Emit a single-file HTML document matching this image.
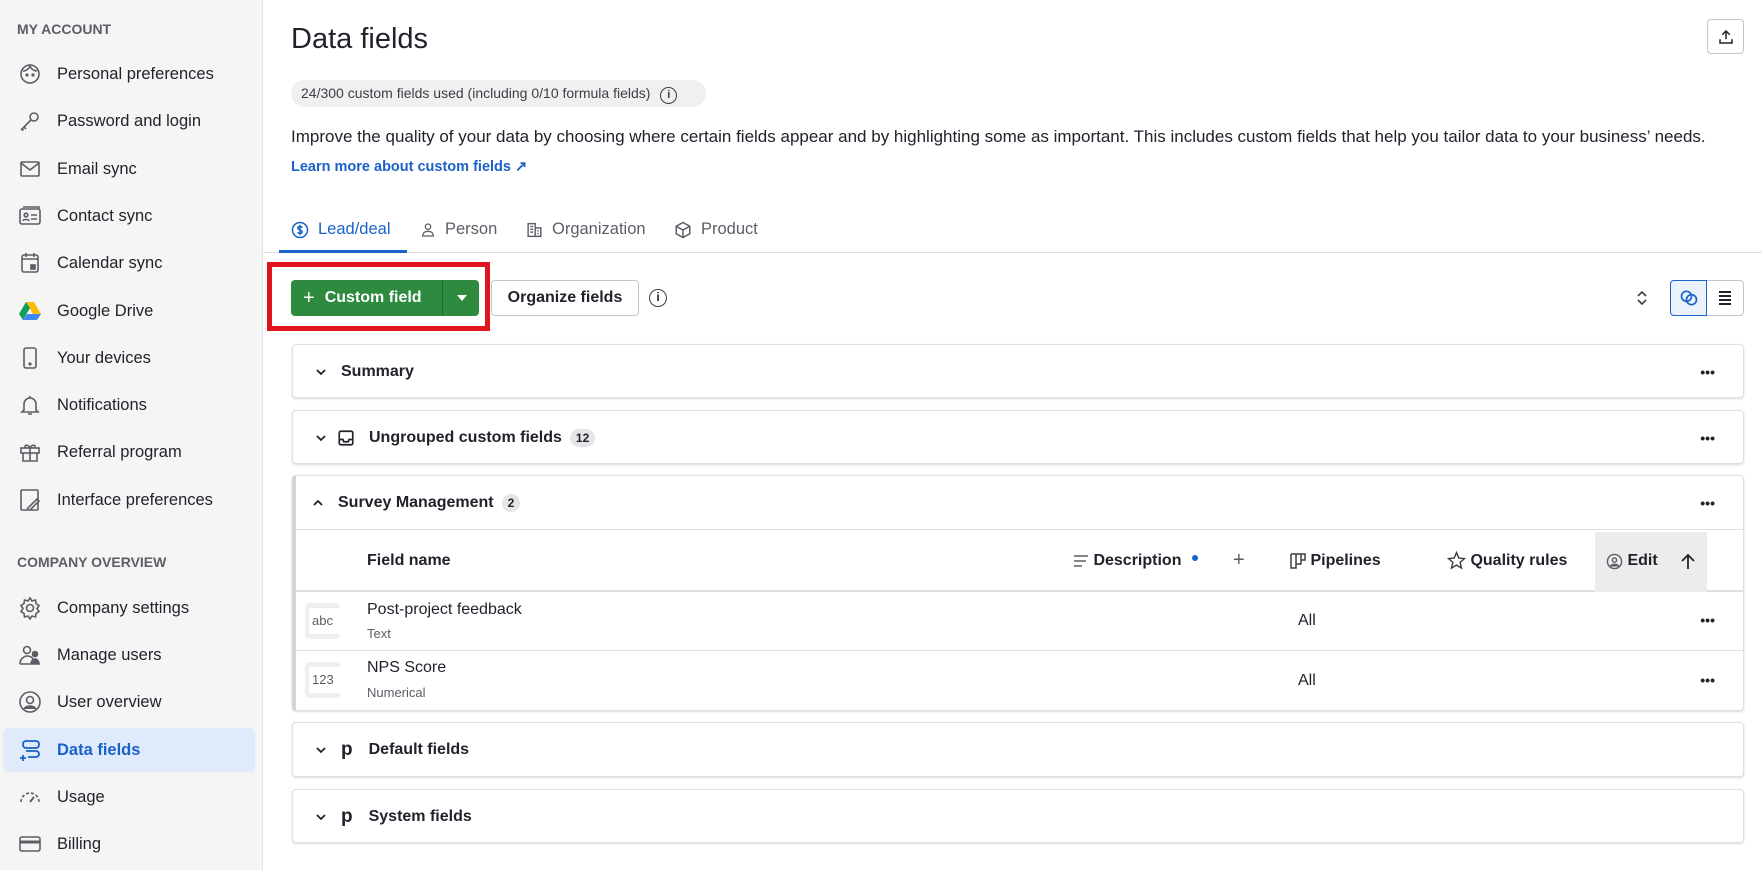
<!DOCTYPE html>
<html><head><meta charset="utf-8"><style>
*{box-sizing:border-box;margin:0;padding:0}
body{width:1762px;height:870px;overflow:hidden;font-family:"Liberation Sans",sans-serif;color:#21232c;background:#fff;position:relative}
.sb{position:absolute;left:0;top:0;width:263px;height:870px;background:#f5f5f5;border-right:1px solid #e4e4e6}
.sh{position:absolute;left:17px;font-size:14px;font-weight:bold;color:#5c5e66}
.it{position:absolute;left:3px;width:252px;height:44px;display:flex;align-items:center;font-size:16.5px;color:#21232c;border-radius:6px}
.it svg{margin-left:15px;margin-right:15px;width:24px;height:24px;flex:none}
.it.act{background:#dfebfa;color:#1a62c9;font-weight:bold}
.a{position:absolute}
.card{position:absolute;left:292px;width:1452px;border:1px solid #e0e0e2;border-radius:4px;box-shadow:0 1px 2px rgba(0,0,0,.15);background:#fff}
.ch{height:54px;display:flex;align-items:center;font-size:16px;font-weight:bold;position:relative}
.ch .cv{margin-left:22px;margin-right:14px;flex:none}
.dots{position:absolute;right:28px;font-weight:bold;font-size:14px;letter-spacing:0px}
.cnt{display:inline-block;background:#e5e5e7;border-radius:9px;font-size:12px;padding:2px 6px;margin-left:8px;font-weight:bold}
</style></head><body>
<div class="sb">
<div class="sh" style="top:21px">MY ACCOUNT</div>
<div class="it" style="top:52px"><svg viewBox="0 0 24 24" fill="none" stroke="#5c5e66" stroke-width="1.6"><circle cx="12" cy="12" r="9"/><path d="M5 9c3 0 6-2 7-5 1 3 4 5 7 5"/><circle cx="9" cy="13" r=".8" fill="#5c5e66"/><circle cx="15" cy="13" r=".8" fill="#5c5e66"/></svg>Personal preferences</div>
<div class="it" style="top:99px"><svg viewBox="0 0 24 24" fill="none" stroke="#5c5e66" stroke-width="1.6"><circle cx="16" cy="8" r="4"/><path d="M13 11L3 21M6 18l2 2M4 20l1.5 1.5"/></svg>Password and login</div>
<div class="it" style="top:147px"><svg viewBox="0 0 24 24" fill="none" stroke="#5c5e66" stroke-width="1.6"><rect x="3" y="5" width="18" height="14" rx="1"/><path d="M3 6l9 7 9-7"/></svg>Email sync</div>
<div class="it" style="top:194px"><svg viewBox="0 0 24 24" fill="none" stroke="#5c5e66" stroke-width="1.6"><rect x="2" y="5" width="20" height="15" rx="2"/><path d="M5 3h16v2"/><circle cx="8" cy="11" r="1.8"/><path d="M5 17c0-2 6-2 6 0M13 11h6M13 15h6"/></svg>Contact sync</div>
<div class="it" style="top:241px"><svg viewBox="0 0 24 24" fill="none" stroke="#5c5e66" stroke-width="1.6"><rect x="4" y="4" width="16" height="17" rx="2"/><path d="M4 8h16M8 2v4M16 2v4"/><rect x="13" y="14" width="4" height="4" fill="#5c5e66"/></svg>Calendar sync</div>
<div class="it" style="top:289px"><svg viewBox="0 0 24 24"><path d="M8 3h8l7 12H15z" fill="#fbbc04"/><path d="M8 3L1 15l4 6 7-12z" fill="#0f9d58"/><path d="M5 21h14l4-6H9z" fill="#4285f4"/></svg>Google Drive</div>
<div class="it" style="top:336px"><svg viewBox="0 0 24 24" fill="none" stroke="#5c5e66" stroke-width="1.6"><rect x="6" y="2" width="12" height="20" rx="2"/><circle cx="12" cy="18" r=".8" fill="#5c5e66"/></svg>Your devices</div>
<div class="it" style="top:383px"><svg viewBox="0 0 24 24" fill="none" stroke="#5c5e66" stroke-width="1.6"><path d="M6 17V11a6 6 0 0112 0v6l2 2H4zM10 21h4M12 3v2"/></svg>Notifications</div>
<div class="it" style="top:430px"><svg viewBox="0 0 24 24" fill="none" stroke="#5c5e66" stroke-width="1.6"><rect x="3" y="8" width="18" height="5"/><path d="M5 13v8h14v-8M12 8v13M12 8c-3-5-7-2-4 0M12 8c3-5 7-2 4 0"/></svg>Referral program</div>
<div class="it" style="top:478px"><svg viewBox="0 0 24 24" fill="none" stroke="#5c5e66" stroke-width="1.6"><rect x="3" y="2" width="17" height="20" rx="1"/><path d="M9 21l10-10 2 2-9 9"/></svg>Interface preferences</div>
<div class="sh" style="top:554px">COMPANY OVERVIEW</div>
<div class="it" style="top:586px"><svg viewBox="0 0 24 24" fill="none" stroke="#5c5e66" stroke-width="1.6"><circle cx="12" cy="12" r="3.5"/><path d="M12 2l2 3 3.5-1 .5 3.5 3 2-2 3 2 3-3 2-.5 3.5L14 20l-2 3-2-3-3.5 1L6 17.5l-3-2 2-3-2-3 3-2L6.5 4 10 5z"/></svg>Company settings</div>
<div class="it" style="top:633px"><svg viewBox="0 0 24 24" fill="none" stroke="#5c5e66" stroke-width="1.6"><circle cx="9" cy="7" r="3.5"/><path d="M2 21c0-5 4-8 7-8s5 1 6 3M2 21h10"/><circle cx="17" cy="11" r="2.5" fill="#5c5e66"/><path d="M13 21c0-3 2-5 4-5s4 2 4 5z" fill="#5c5e66"/></svg>Manage users</div>
<div class="it" style="top:680px"><svg viewBox="0 0 24 24" fill="none" stroke="#5c5e66" stroke-width="1.6"><circle cx="12" cy="12" r="10"/><circle cx="12" cy="10" r="3.5"/><path d="M6 19c2-4 10-4 12 0" fill="#5c5e66"/></svg>User overview</div>
<div class="it act" style="top:728px"><svg viewBox="0 0 24 24" fill="none" stroke="#1a62c9" stroke-width="1.8"><rect x="5" y="3" width="16" height="7" rx="3"/><path d="M8 13h10a3 3 0 010 6h-8M2 20h6M5 17v6"/></svg>Data fields</div>
<div class="it" style="top:775px"><svg viewBox="0 0 24 24" fill="none" stroke="#5c5e66" stroke-width="1.6"><path d="M3 17a9 9 0 0118 0" stroke-dasharray="3 2"/><path d="M12 17l4-5" stroke-width="2"/></svg>Usage</div>
<div class="it" style="top:822px"><svg viewBox="0 0 24 24" fill="none" stroke="#5c5e66" stroke-width="1.6"><rect x="2" y="5" width="20" height="14" rx="2"/><path d="M2 10h20" stroke-width="3"/></svg>Billing</div>
</div>

<div class="a" style="left:291px;top:23px;font-size:29px">Data fields</div>
<div class="a" style="left:1707px;top:19px;width:37px;height:35px;border:1px solid #c5c6ca;border-radius:4px;display:flex;align-items:center;justify-content:center"><svg width="18" height="18" viewBox="0 0 24 24" fill="none" stroke="#21232c" stroke-width="2"><path d="M12 15V4M7 9l5-5 5 5M4 15v5h16v-5"/></svg></div>
<div class="a" style="left:291px;top:80px;width:415px;height:27px;background:#f0f0f1;border-radius:14px;font-size:14px;color:#3c3e46;padding:5px 10px">24/300 custom fields used (including 0/10 formula fields) <span style="display:inline-block;width:17px;height:17px;border:1.5px solid #3c3e46;border-radius:50%;font-size:11px;text-align:center;line-height:14px;margin-left:6px;font-weight:bold">i</span></div>
<div class="a" style="left:291px;top:127px;font-size:17px;white-space:nowrap">Improve the quality of your data by choosing where certain fields appear and by highlighting some as important. This includes custom fields that help you tailor data to your business’ needs.</div>
<div class="a" style="left:291px;top:159px;font-size:14.5px;font-weight:bold;color:#1a62c9">Learn more about custom fields ↗</div>

<div class="a" style="left:263px;top:252px;width:1499px;height:1px;background:#e0e0e2"></div>
<div class="a" style="left:279px;top:250px;width:128px;height:3px;background:#1a62c9"></div>
<div class="a" style="left:291px;top:220px;font-size:16.5px;color:#1a62c9;display:flex;align-items:center"><svg width="18" height="18" viewBox="0 0 24 24" fill="none" stroke="#1a62c9" stroke-width="2" style="margin-right:9px"><circle cx="12" cy="12" r="10"/><path d="M15 9c-1-2-6-2-6 .5S15 12 15 14.5 10 17 9 15M12 5v14"/></svg>Lead/deal</div>
<div class="a" style="left:420px;top:220px;font-size:16.5px;color:#5c5e66;display:flex;align-items:center"><svg width="16" height="18" viewBox="0 0 24 24" fill="none" stroke="#5c5e66" stroke-width="2" style="margin-right:9px"><circle cx="12" cy="7" r="4"/><path d="M4 21c0-5 4-7 8-7s8 2 8 7z"/></svg>Person</div>
<div class="a" style="left:526px;top:220px;font-size:16.5px;color:#5c5e66;display:flex;align-items:center"><svg width="17" height="18" viewBox="0 0 24 24" fill="none" stroke="#5c5e66" stroke-width="2" style="margin-right:9px"><rect x="3" y="3" width="10" height="18"/><path d="M13 9h8v12h-8M6 7h4M6 11h4M6 15h4M16 13h2M16 17h2"/></svg>Organization</div>
<div class="a" style="left:674px;top:220px;font-size:16.5px;color:#5c5e66;display:flex;align-items:center"><svg width="18" height="18" viewBox="0 0 24 24" fill="none" stroke="#5c5e66" stroke-width="2" style="margin-right:9px"><path d="M12 2l9 5v10l-9 5-9-5V7zM3 7l9 5 9-5M12 12v10"/></svg>Product</div>

<div class="a" style="left:267px;top:262px;width:223px;height:69px;border:5px solid #e0141e"></div>
<div class="a" style="left:291px;top:280px;width:188px;height:36px;background:#2d8a3e;border-radius:4px;color:#fff;font-weight:bold;font-size:16px;display:flex;align-items:center"><span style="margin-left:12px;font-size:20px;font-weight:normal;margin-right:10px">+</span>Custom field<div style="position:absolute;left:151px;top:0;width:1px;height:36px;background:#1f6b2e"></div><div style="position:absolute;left:166px;top:15px;border:5px solid transparent;border-top:6px solid #fff"></div></div>
<div class="a" style="left:491px;top:280px;width:148px;height:36px;border:1px solid #c5c6ca;border-radius:4px;font-weight:bold;font-size:16px;display:flex;align-items:center;justify-content:center">Organize fields</div>
<div class="a" style="left:649px;top:289px;width:18px;height:18px;border:1.5px solid #3c3e46;border-radius:50%;font-size:12px;text-align:center;line-height:15px;font-weight:bold">i</div>
<svg class="a" style="left:1634px;top:288px" width="16" height="20" viewBox="0 0 16 20" fill="none" stroke="#3c3e46" stroke-width="1.6"><path d="M4 8l4-4 4 4M4 12l4 4 4-4"/></svg>
<div class="a" style="left:1670px;top:280px;width:74px;height:36px;border:1px solid #c5c6ca;border-radius:4px;background:#fff"></div>
<div class="a" style="left:1670px;top:280px;width:37px;height:36px;border:1px solid #1a62c9;border-radius:4px 0 0 4px;background:#eaf2fc;display:flex;align-items:center;justify-content:center"><svg width="20" height="20" viewBox="0 0 24 24" fill="none" stroke="#1a62c9" stroke-width="2"><circle cx="9" cy="10" r="6"/><circle cx="15" cy="14" r="6"/></svg></div>
<svg class="a" style="left:1716px;top:289px" width="18" height="18" viewBox="0 0 18 18" stroke="#21232c" stroke-width="2"><path d="M3 3h12M3 7h12M3 11h12M3 15h12"/></svg>

<div class="card" style="top:344px;height:54px"><div class="ch"><svg class="cv" width="12" height="12" viewBox="0 0 12 12" fill="none" stroke="#21232c" stroke-width="1.8"><path d="M2 4l4 4 4-4"/></svg>Summary<span class="dots">•••</span></div></div>
<div class="card" style="top:410px;height:54px"><div class="ch"><svg class="cv" style="margin-right:10px" width="12" height="12" viewBox="0 0 12 12" fill="none" stroke="#21232c" stroke-width="1.8"><path d="M2 4l4 4 4-4"/></svg><svg width="18" height="18" viewBox="0 0 24 24" fill="none" stroke="#21232c" stroke-width="2.2" style="margin-right:14px"><rect x="3" y="3" width="18" height="18" rx="2"/><path d="M3 14h5l1 3h6l1-3h5"/></svg>Ungrouped custom fields<span class="cnt">12</span><span class="dots">•••</span></div></div>

<div class="card" style="top:475px;height:236px;border-left:4px solid #d5d5d8">
<div class="ch" style="border-bottom:1px solid #e0e0e2"><svg class="cv" style="margin-left:16px" width="12" height="12" viewBox="0 0 12 12" fill="none" stroke="#21232c" stroke-width="1.8"><path d="M2 8l4-4 4 4"/></svg>Survey Management<span class="cnt">2</span><span class="dots">•••</span></div>
<div style="height:62px;border-bottom:2px solid #e0e0e2;position:relative;font-weight:bold;font-size:16px">
<span class="a" style="left:71px;top:22px">Field name</span>
<span class="a" style="left:777px;top:22px;display:flex;align-items:center"><svg width="16" height="14" viewBox="0 0 16 14" stroke="#5c5e66" stroke-width="1.6"><path d="M1 2h14M1 7h12M1 12h8"/></svg>&nbsp;Description</span>
<span class="a" style="left:896px;top:25px;width:6px;height:6px;border-radius:50%;background:#1a62c9"></span>
<span class="a" style="left:937px;top:19px;font-weight:normal;font-size:20px;color:#5c5e66">+</span>
<span class="a" style="left:994px;top:22px;display:flex;align-items:center"><svg width="16" height="18" viewBox="0 0 16 18" fill="none" stroke="#3c3e46" stroke-width="1.5"><path d="M1 2h14v6h-4v-6M6 2v14H1V2M11 2v10H6"/></svg>&nbsp;Pipelines</span>
<span class="a" style="left:1151px;top:21px;display:flex;align-items:center"><svg width="19" height="19" viewBox="0 0 24 24" fill="none" stroke="#3c3e46" stroke-width="1.8"><path d="M12 2l3 7 7 .6-5.4 4.7 1.7 7.2L12 17.8 5.7 21.5l1.7-7.2L2 9.6 9 9z"/></svg>&nbsp;Quality rules</span>
<div class="a" style="left:1299px;top:2px;width:112px;height:60px;background:#ececed"></div>
<span class="a" style="left:1310px;top:22px;display:flex;align-items:center"><svg width="17" height="17" viewBox="0 0 24 24" fill="none" stroke="#5c5e66" stroke-width="2"><circle cx="12" cy="12" r="10"/><circle cx="12" cy="10" r="3"/><path d="M6 19c2-4 10-4 12 0" fill="#5c5e66"/></svg>&nbsp;Edit</span>
<svg class="a" style="left:1384px;top:23px" width="16" height="18" viewBox="0 0 16 18" fill="none" stroke="#21232c" stroke-width="1.8"><path d="M8 16V2M2 8l6-6 6 6"/></svg>
</div>
<div style="height:59px;border-bottom:1px solid #e0e0e2;position:relative">
<div class="a" style="left:9px;top:11px;width:35px;height:36px;background:#f0f0f1;border-radius:4px"><div style="position:absolute;left:4px;top:5px;width:31px;height:26px;background:#fff;font-size:13px;color:#5c5e66;padding:5px 3px">abc</div></div>
<span class="a" style="left:71px;top:9px;font-size:16px">Post-project feedback</span>
<span class="a" style="left:71px;top:34px;font-size:13px;color:#5c5e66">Text</span>
<span class="a" style="left:1002px;top:20px;font-size:16px">All</span>
<span class="dots" style="top:20px">•••</span>
</div>
<div style="height:59px;position:relative">
<div class="a" style="left:9px;top:11px;width:35px;height:36px;background:#f0f0f1;border-radius:4px"><div style="position:absolute;left:4px;top:5px;width:31px;height:26px;background:#fff;font-size:13px;color:#5c5e66;padding:5px 3px">123</div></div>
<span class="a" style="left:71px;top:8px;font-size:16px">NPS Score</span>
<span class="a" style="left:71px;top:34px;font-size:13px;color:#5c5e66">Numerical</span>
<span class="a" style="left:1002px;top:21px;font-size:16px">All</span>
<span class="dots" style="top:21px">•••</span>
</div>
</div>

<div class="card" style="top:722px;height:55px"><div class="ch"><svg class="cv" width="12" height="12" viewBox="0 0 12 12" fill="none" stroke="#21232c" stroke-width="1.8"><path d="M2 4l4 4 4-4"/></svg><span style="font-size:19px;margin-right:16px;font-weight:900">p</span>Default fields</div></div>
<div class="card" style="top:789px;height:54px"><div class="ch"><svg class="cv" width="12" height="12" viewBox="0 0 12 12" fill="none" stroke="#21232c" stroke-width="1.8"><path d="M2 4l4 4 4-4"/></svg><span style="font-size:19px;margin-right:16px;font-weight:900">p</span>System fields</div></div>
</body></html>
